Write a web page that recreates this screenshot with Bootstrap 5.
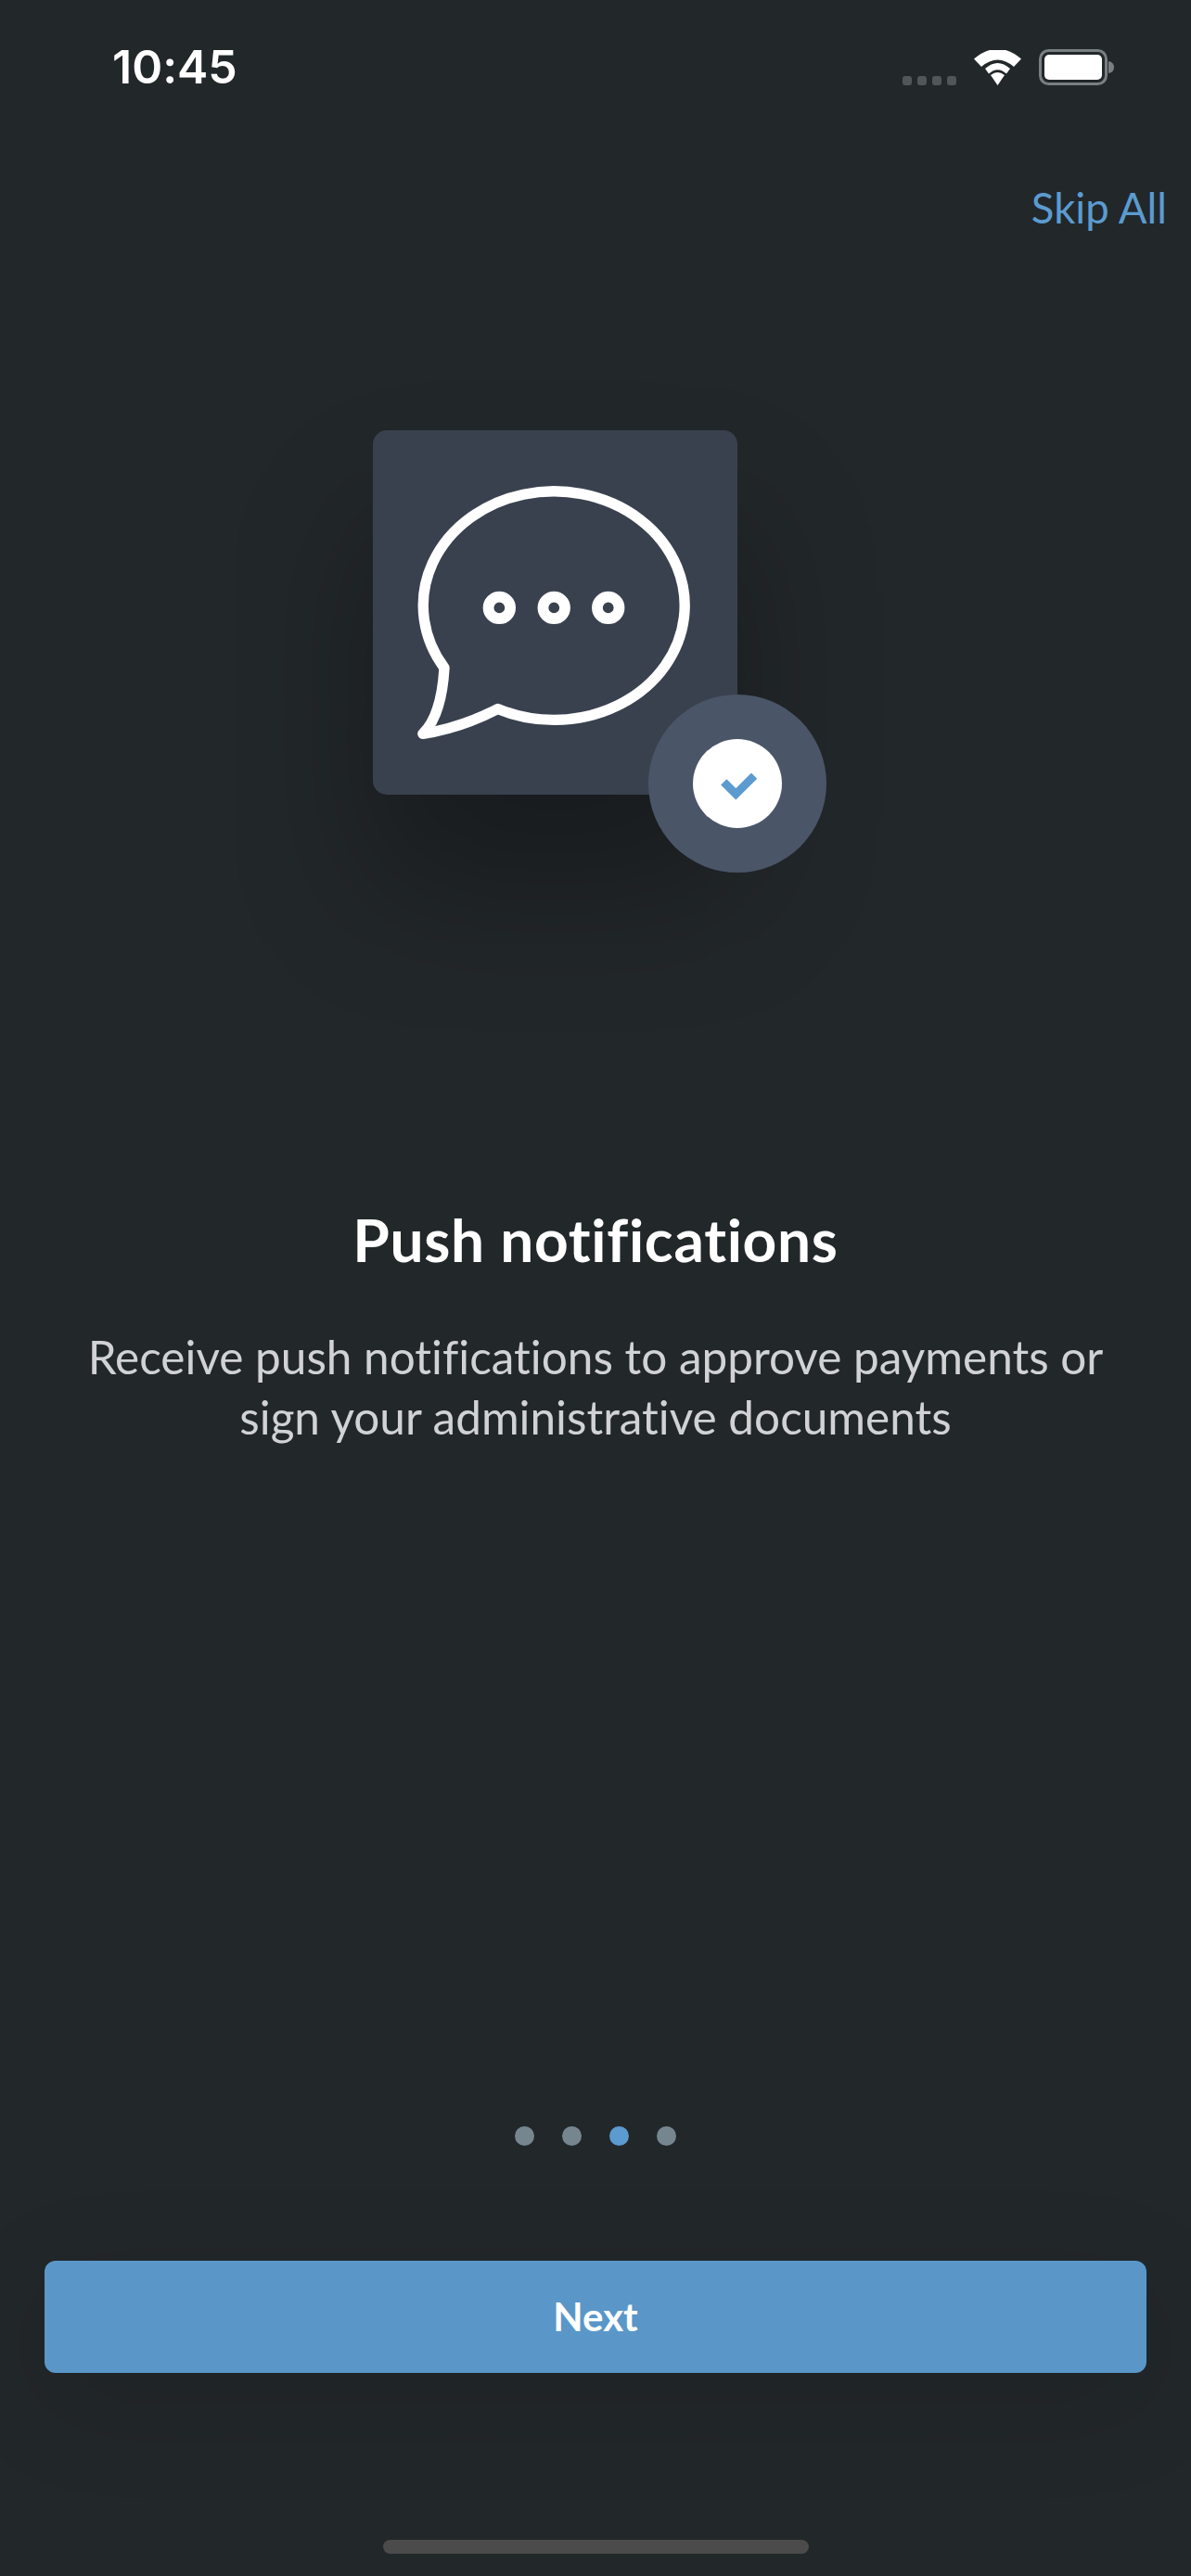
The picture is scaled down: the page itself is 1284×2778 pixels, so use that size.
<!DOCTYPE html>
<html lang="en">
<head>
  <meta charset="UTF-8">
  <meta name="viewport" content="width=device-width, initial-scale=1.0">
  <title>Push notifications</title>
  <link href="https://cdn.jsdelivr.net/npm/bootstrap@5.3.2/dist/css/bootstrap.min.css" rel="stylesheet">
  <style>
    body {
      background-color: #22272a;
      font-family: Lato, "Noto Sans", sans-serif;
      font-variant-ligatures: none;
    }
    .app-screen {
      width: 1284px;
      height: 2778px;
      overflow: hidden;
    }
    .status-row {
      height: 92px;
      padding: 53px 82px 0 121px;
    }
    .status-time {
      font-family: Inter, "Liberation Sans", sans-serif;
      font-weight: 600;
      font-size: 50px;
      line-height: 39px;
    }
    .status-icons {
      gap: 19px;
    }
    .signal-dot {
      width: 10px;
      height: 10px;
      border-radius: 3px;
      background: #50565a;
    }
    .signal-dots {
      gap: 6px;
      margin-right: 0;
    }
    .skip-row {
      padding: 104px 26px 0 0;
      height: 372px;
      font-size: 45.5px;
      line-height: 56px;
    }
    .skip-link {
      color: #5b9bd0;
      text-decoration: none;
    }
    .art-wrap {
      width: 393px;
      height: 393px;
      margin-left: 402px;
    }
    .art-card {
      width: 393px;
      height: 393px;
      background: #39414e;
      border-radius: 15px;
      box-shadow: 0 100px 150px 0 rgba(0, 0, 0, .3);
    }
    .art-badge {
      width: 192px;
      height: 192px;
      top: 285px;
      left: 297px;
      background: #4a5568;
    }
    .art-badge-inner {
      width: 96px;
      height: 96px;
    }
    .screen-title {
      margin-top: 440px;
      font-size: 64px;
      line-height: 80px;
      font-weight: 700;
      letter-spacing: .7px;
    }
    .screen-text {
      margin-top: 54px;
      font-size: 49.5px;
      line-height: 65px;
      color: #d0d2d3;
    }
    .pager {
      margin-top: 732px;
      gap: 30px;
    }
    .pager-dot {
      width: 21px;
      height: 21px;
      background: #76868f;
    }
    .pager-dot.active-dot {
      background: #5b9bd0;
    }
    .next-btn {
      margin: 124px 48px 0;
      width: 1188px;
      height: 121px;
      background: #5a97c8;
      border: 0;
      border-radius: 12px;
      font-size: 42px;
      font-weight: 700;
      box-shadow: 0 30px 120px rgba(0, 0, 0, .12);
    }
    .home-bar {
      width: 459px;
      height: 15px;
      margin: 180px auto 0;
      background: #4b4b4b;
      border-radius: 8px;
    }
  </style>
</head>
<body class="m-0">
  <div class="app-screen d-flex flex-column text-white">
    <!-- Status bar -->
    <div class="status-row d-flex justify-content-between align-items-start">
      <span class="status-time">10:45</span>
      <div class="status-icons d-flex align-items-end">
        <div class="signal-dots d-flex">
          <span class="signal-dot"></span><span class="signal-dot"></span><span class="signal-dot"></span><span class="signal-dot"></span>
        </div>
        <svg width="51" height="38" viewBox="0 0 51 38">
          <path d="M25.5 38 L18 27 Q25.5 21 33 27 Z" fill="#fff"/>
          <path d="M12 20 Q25.5 8 39 20 L35 25.5 Q25.5 17 16 25.5 Z" fill="#fff"/>
          <path d="M0 9.5 Q25.5 -12 51 9.5 L43 18 Q25.5 3 8 18 Z" fill="#fff"/>
        </svg>
        <svg width="82" height="39" viewBox="0 0 82 39">
          <rect x="1.5" y="1.5" width="71" height="36" rx="9" fill="none" stroke="#7a7f82" stroke-width="3"/>
          <rect x="6" y="6" width="62" height="27" rx="5" fill="#fff"/>
          <path d="M75 13 Q81 14 81 19.5 Q81 25 75 26 Z" fill="#7a7f82"/>
        </svg>
      </div>
    </div>

    <div class="skip-row d-flex justify-content-end align-items-start">
      <a class="skip-link" href="#">Skip All</a>
    </div>

    <!-- Illustration -->
    <div class="art-wrap position-relative">
      <div class="art-card">
        <svg width="393" height="393" viewBox="242 104 934 934">
          <path d="M425 713 A335 293 0 1 1 562 818 Q470 866 370 882 Q418 835 425 713 Z" fill="none" stroke="#fff" stroke-width="27" stroke-linejoin="round"/>
          <circle cx="566" cy="559" r="28" fill="none" stroke="#fff" stroke-width="28"/>
          <circle cx="706" cy="559" r="28" fill="none" stroke="#fff" stroke-width="28"/>
          <circle cx="845" cy="559" r="28" fill="none" stroke="#fff" stroke-width="28"/>
        </svg>
      </div>
      <div class="art-badge position-absolute rounded-circle d-flex align-items-center justify-content-center">
        <div class="art-badge-inner bg-white rounded-circle">
          <svg class="d-block" width="96" height="96" viewBox="1062 895 228 228">
            <path d="M1141 1005 L1172 1036 L1219 989" fill="none" stroke="#5b9bd0" stroke-width="21"/>
          </svg>
        </div>
      </div>
    </div>

    <h1 class="screen-title text-center mb-0">Push notifications</h1>
    <p class="screen-text text-center mb-0">Receive push notifications to approve payments or<br>sign your administrative documents</p>

    <!-- Pager -->
    <div class="pager d-flex justify-content-center">
      <span class="pager-dot rounded-circle"></span>
      <span class="pager-dot rounded-circle"></span>
      <span class="pager-dot active-dot rounded-circle"></span>
      <span class="pager-dot rounded-circle"></span>
    </div>

    <button type="button" class="btn next-btn text-white">Next</button>
    <div class="home-bar"></div>
  </div>

  <script src="https://cdn.jsdelivr.net/npm/bootstrap@5.3.2/dist/js/bootstrap.bundle.min.js"></script>
</body>
</html>
